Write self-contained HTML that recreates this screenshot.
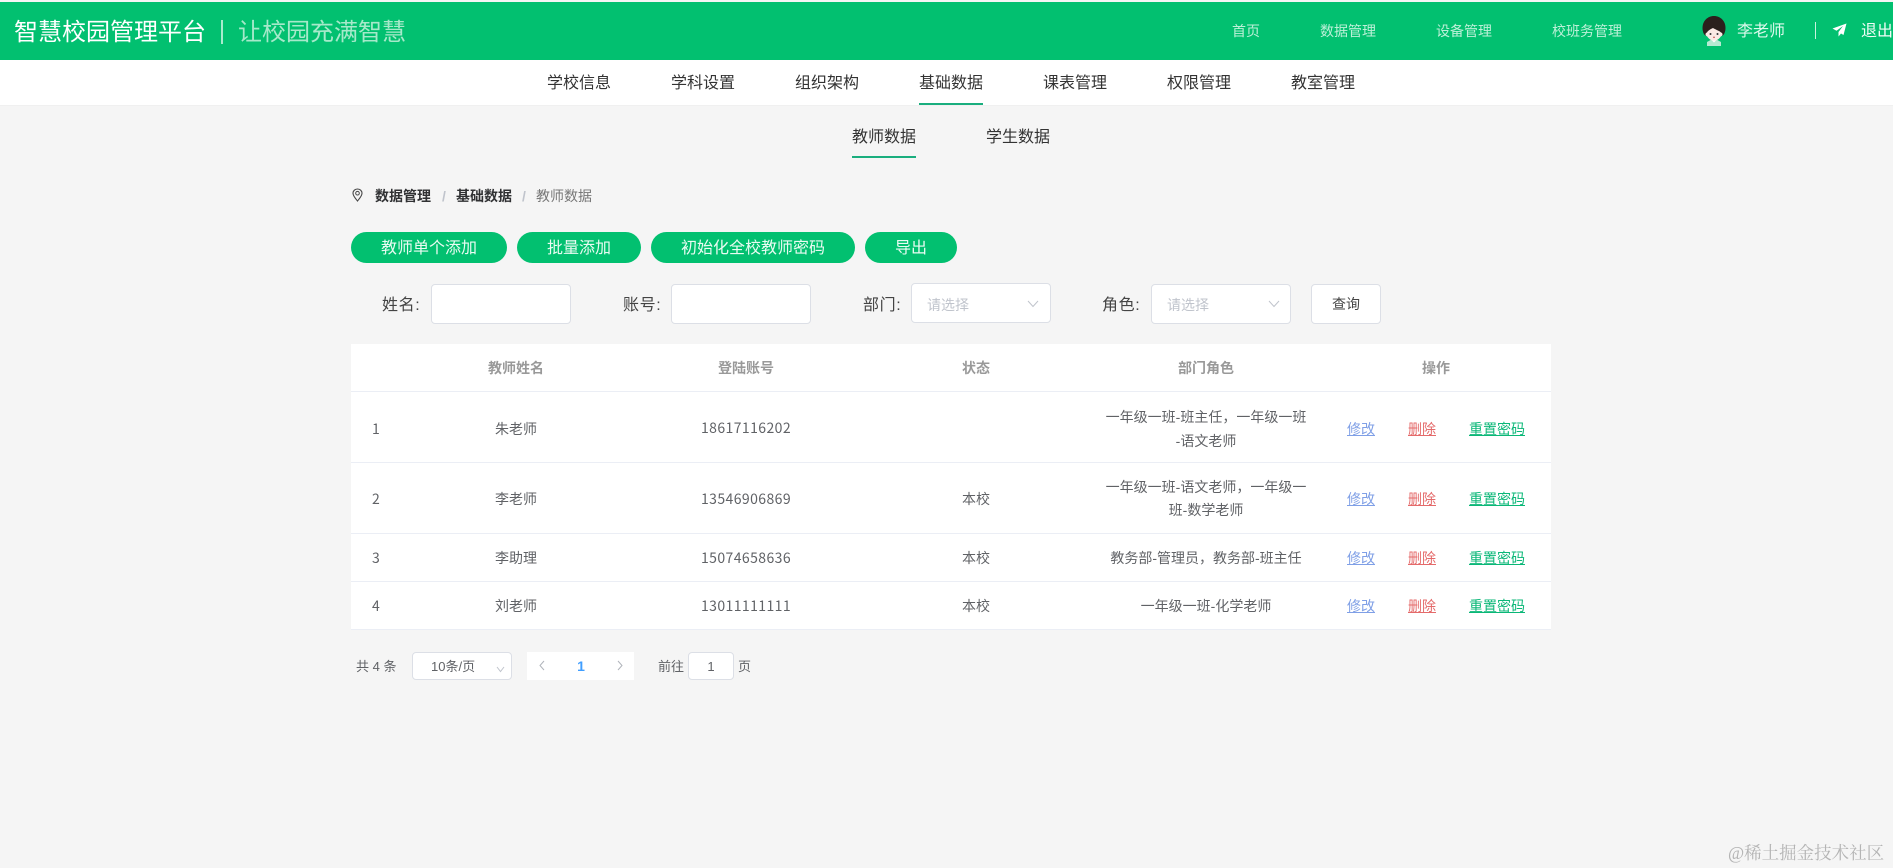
<!DOCTYPE html>
<html lang="zh">
<head>
<meta charset="utf-8">
<title>智慧校园管理平台</title>
<style>
*{box-sizing:border-box;margin:0;padding:0}
html,body{width:1893px;height:868px;overflow:hidden;background:#f5f5f5}
body{position:relative;font-family:"Liberation Sans","Noto Sans CJK SC",sans-serif;color:#333}
.a{position:absolute;white-space:nowrap}
.t{position:absolute;white-space:nowrap;height:24px;line-height:24px}
.c{text-align:center}
.top{left:0;top:2px;width:1893px;height:58px;background:#02c070}
.sub{left:0;top:60px;width:1893px;height:46px;background:#fff;border-bottom:1px solid #f0f0f0}
.n{font-size:14px;color:#bdf0d8}
.s{font-size:16px;color:#333}
.btn{position:absolute;top:232px;height:31px;line-height:33px;border-radius:16px;background:#02c070;color:#e9fbf2;font-size:16px;text-align:center}
.box{position:absolute;background:#fff;border:1px solid #dcdfe6;border-radius:4px}
.lab{font-size:16px;color:#444;top:294px;letter-spacing:.6px}
.ph{font-size:14px;color:#c0c4cc;top:293px}
.th{font-size:14px;font-weight:bold;color:#999;top:356px}
.td{font-size:14px;color:#606266}
.num{font-family:"Noto Sans CJK SC",sans-serif;letter-spacing:.42px;font-kerning:none}
.l{font-size:14px;text-decoration:underline}
.blue{color:#7f9fe6;left:1347px}
.red{color:#e46a6a;left:1408px}
.green{color:#0ab777;left:1469px}
.line{position:absolute;left:351px;width:1200px;height:1px;background:#ebeef5}
.p{font-size:13px;color:#606266;top:655px}
</style>
</head>
<body>
<div class="a top"></div>
<div class="t" style="left:14px;top:18px;height:30px;line-height:30px;font-size:24px;color:#fff">智慧校园管理平台</div>
<div class="a" style="left:221px;top:20px;width:2px;height:24px;background:#a9ebcd"></div>
<div class="t" style="left:238px;top:18px;height:30px;line-height:30px;font-size:24px;color:#a6e9ca">让校园充满智慧</div>

<div class="t n" style="left:1232px;top:19px">首页</div>
<div class="t n" style="left:1320px;top:19px">数据管理</div>
<div class="t n" style="left:1436px;top:19px">设备管理</div>
<div class="t n" style="left:1552px;top:19px">校班务管理</div>

<svg class="a" style="left:1702px;top:16px" width="24" height="30" viewBox="0 0 24 30">
<path d="M5 30V26L9.500 23.500H14.500L19 26V30Z" fill="#b5ead2"/>
<path d="M9 23.500L12 26.500L15 23.500Z" fill="#fff"/>
<path d="M.5 12C.5 5 5.500 0 12 0S23.500 5 23.500 12C23.500 16 22 19 20 20H4C2 19 .5 16 .5 12Z" fill="#2b201d"/>
<path d="M3.500 18.500C3.500 17 4.500 16.500 5 16.500C6 14.500 8 13.500 11 12C13 13.500 17 14.500 19 16.500C19.500 16.500 20.500 17 20.500 18.500C20.500 19.500 20 20 19 20.200C17 23 15 24.500 12 24.500C9 24.500 7 23 5 20.200C4 20 3.500 19.500 3.500 18.500Z" fill="#fbe9e4"/>
<circle cx="8.500" cy="18" r="1" fill="#333"/><circle cx="15.500" cy="18" r="1" fill="#333"/>
<circle cx="12" cy="21.300" r=".8" fill="#b44"/>
</svg>
<div class="t" style="left:1737px;top:20px;font-size:16px;color:#dcf9ec">李老师</div>
<div class="a" style="left:1815px;top:22px;width:1px;height:17px;background:#c9f2de"></div>
<svg class="a" style="left:1832px;top:23px" width="15" height="14" viewBox="0 0 15 14">
<path d="M14.500 .5L.5 5.500L4.500 7.800L11 3L6.500 9V13.500L9 10.500L11.500 12Z" fill="#fff"/>
</svg>
<div class="t" style="left:1861px;top:20px;font-size:16px;color:#f0fdf7">退出</div>

<div class="a sub"></div>
<div class="t s" style="left:547px;top:72px">学校信息</div>
<div class="t s" style="left:671px;top:72px">学科设置</div>
<div class="t s" style="left:795px;top:72px">组织架构</div>
<div class="t s" style="left:919px;top:72px">基础数据</div>
<div class="t s" style="left:1043px;top:72px">课表管理</div>
<div class="t s" style="left:1167px;top:72px">权限管理</div>
<div class="t s" style="left:1291px;top:72px">教室管理</div>
<div class="a" style="left:919px;top:103px;width:64px;height:2px;background:#1aae7e"></div>

<div class="t s" style="left:852px;top:126px">教师数据</div>
<div class="t s" style="left:986px;top:126px">学生数据</div>
<div class="a" style="left:852px;top:156px;width:64px;height:2px;background:#1aae7e"></div>

<svg class="a" style="left:352px;top:188px" width="11" height="14" viewBox="0 0 11 14">
<path d="M5.500 13C3.500 10.500 1 8 1 5.300C1 2.800 3 1 5.500 1S10 2.800 10 5.300C10 8 7.500 10.500 5.500 13Z" fill="none" stroke="#444" stroke-width="1.100"/>
<circle cx="5.500" cy="5.200" r="1.800" fill="none" stroke="#444" stroke-width="1"/>
</svg>
<div class="t" style="left:375px;top:184px;font-size:14px;font-weight:bold;color:#303133">数据管理</div>
<div class="t" style="left:442px;top:184px;font-size:14px;font-weight:bold;color:#c0c4cc">/</div>
<div class="t" style="left:456px;top:184px;font-size:14px;font-weight:bold;color:#303133">基础数据</div>
<div class="t" style="left:522px;top:184px;font-size:14px;font-weight:bold;color:#c0c4cc">/</div>
<div class="t" style="left:536px;top:184px;font-size:14px;color:#777">教师数据</div>

<div class="btn" style="left:351px;width:156px">教师单个添加</div>
<div class="btn" style="left:517px;width:124px">批量添加</div>
<div class="btn" style="left:651px;width:204px">初始化全校教师密码</div>
<div class="btn" style="left:865px;width:92px">导出</div>

<div class="t lab" style="left:382px">姓名:</div>
<div class="box" style="left:431px;top:284px;width:140px;height:40px"></div>
<div class="t lab" style="left:623px">账号:</div>
<div class="box" style="left:671px;top:284px;width:140px;height:40px"></div>
<div class="t lab" style="left:863px">部门:</div>
<div class="box" style="left:911px;top:283px;width:140px;height:40px"></div>
<div class="t ph" style="left:927px">请选择</div>
<svg class="a" style="left:1027px;top:300px" width="12" height="8" viewBox="0 0 12 8"><path d="M1 1L6 6.500L11 1" fill="none" stroke="#c0c4cc"/></svg>
<div class="t lab" style="left:1102px">角色:</div>
<div class="box" style="left:1151px;top:284px;width:140px;height:40px"></div>
<div class="t ph" style="left:1167px">请选择</div>
<svg class="a" style="left:1268px;top:300px" width="12" height="8" viewBox="0 0 12 8"><path d="M1 1L6 6.500L11 1" fill="none" stroke="#c0c4cc"/></svg>
<div class="box" style="left:1311px;top:284px;width:70px;height:40px"></div>
<div class="t c" style="left:1311px;width:70px;top:292px;font-size:14px;color:#444">查询</div>

<div class="a" style="left:351px;top:344px;width:1200px;height:285px;background:#fff"></div>
<div class="line" style="top:391px"></div>
<div class="line" style="top:462px"></div>
<div class="line" style="top:533px"></div>
<div class="line" style="top:581px"></div>
<div class="line" style="top:629px"></div>

<div class="t c th" style="left:416px;width:200px">教师姓名</div>
<div class="t c th" style="left:646px;width:200px">登陆账号</div>
<div class="t c th" style="left:876px;width:200px">状态</div>
<div class="t c th" style="left:1106px;width:200px">部门角色</div>
<div class="t c th" style="left:1336px;width:200px">操作</div>

<div class="t td num" style="left:372px;top:417px">1</div>
<div class="t td c" style="left:416px;width:200px;top:417px">朱老师</div>
<div class="t td c num" style="left:646px;width:200px;top:416px">18617116202</div>
<div class="a td c" style="left:1056px;width:300px;top:405px;line-height:24px;height:48px">一年级一班-班主任，一年级一班<br>-语文老师</div>
<div class="t l blue" style="top:417px">修改</div><div class="t l red" style="top:417px">删除</div><div class="t l green" style="top:417px">重置密码</div>

<div class="t td num" style="left:372px;top:487px">2</div>
<div class="t td c" style="left:416px;width:200px;top:487px">李老师</div>
<div class="t td c num" style="left:646px;width:200px;top:487px">13546906869</div>
<div class="t td c" style="left:876px;width:200px;top:487px">本校</div>
<div class="a td c" style="left:1056px;width:300px;top:476px;line-height:23px;height:46px">一年级一班-语文老师，一年级一<br>班-数学老师</div>
<div class="t l blue" style="top:487px">修改</div><div class="t l red" style="top:487px">删除</div><div class="t l green" style="top:487px">重置密码</div>

<div class="t td num" style="left:372px;top:546px">3</div>
<div class="t td c" style="left:416px;width:200px;top:546px">李助理</div>
<div class="t td c num" style="left:646px;width:200px;top:546px">15074658636</div>
<div class="t td c" style="left:876px;width:200px;top:546px">本校</div>
<div class="t td c" style="left:1056px;width:300px;top:546px">教务部-管理员，教务部-班主任</div>
<div class="t l blue" style="top:546px">修改</div><div class="t l red" style="top:546px">删除</div><div class="t l green" style="top:546px">重置密码</div>

<div class="t td num" style="left:372px;top:594px">4</div>
<div class="t td c" style="left:416px;width:200px;top:594px">刘老师</div>
<div class="t td c num" style="left:646px;width:200px;top:594px">13011111111</div>
<div class="t td c" style="left:876px;width:200px;top:594px">本校</div>
<div class="t td c" style="left:1056px;width:300px;top:594px">一年级一班-化学老师</div>
<div class="t l blue" style="top:594px">修改</div><div class="t l red" style="top:594px">删除</div><div class="t l green" style="top:594px">重置密码</div>

<div class="t p" style="left:356px">共 4 条</div>
<div class="box" style="left:412px;top:652px;width:100px;height:28px"></div>
<div class="t p" style="left:431px">10条/页</div>
<svg class="a" style="left:496px;top:666px" width="9" height="7" viewBox="0 0 9 7"><path d="M1 1L4.500 5.500L8 1" fill="none" stroke="#c0c4cc"/></svg>
<div class="a" style="left:527px;top:652px;width:107px;height:28px;background:#fff"></div>
<svg class="a" style="left:538px;top:660px" width="8" height="11" viewBox="0 0 8 11"><path d="M6 1L2 5.500L6 10" fill="none" stroke="#b0b4bb"/></svg>
<svg class="a" style="left:616px;top:660px" width="8" height="11" viewBox="0 0 8 11"><path d="M2 1L6 5.500L2 10" fill="none" stroke="#b0b4bb"/></svg>
<div class="t c" style="left:561px;width:40px;top:654px;font-size:14px;font-weight:bold;color:#409eff">1</div>
<div class="t p" style="left:658px">前往</div>
<div class="box" style="left:688px;top:652px;width:46px;height:28px"></div>
<div class="t p c" style="left:688px;width:46px">1</div>
<div class="t p" style="left:738px">页</div>

<div class="t" style="left:1728px;top:841px;font-size:17.500px;font-family:'Liberation Serif','Noto Serif CJK SC',serif;color:#b4b4b4">@稀土掘金技术社区</div>
</body>
</html>
